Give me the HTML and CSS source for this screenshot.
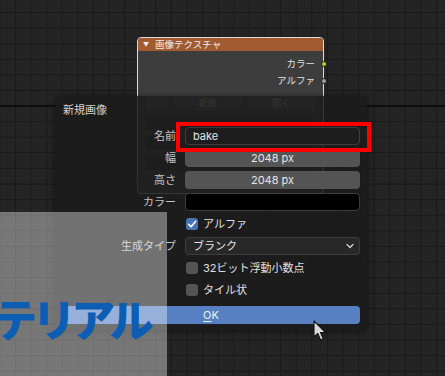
FILE: index.html
```html
<!DOCTYPE html>
<html lang="ja">
<head>
<meta charset="utf-8">
<link rel="stylesheet" href="styles.css">
</head>
<body>
<div class="canvas">
  <div class="major-line"></div>

  <div class="node">
    <div class="node-head"><span class="tri">▼</span>画像テクスチャ</div>
    <div class="node-body">
      <div class="out"><span>カラー</span><i class="sock sock-yellow"></i></div>
      <div class="out"><span>アルファ</span><i class="sock sock-gray"></i></div>
      <div class="node-tools">
        <span class="nt-icon"></span>
        <span class="nt-btn">新規</span>
        <span class="nt-btn">開く</span>
      </div>
      <div class="node-sel"></div>
      <div class="node-sel"></div>
      <div class="node-sel"></div>
      <div class="node-in"><i class="sock sock-blue"></i></div>
    </div>
  </div>

  <div class="dialog">
    <div class="dlg-title">新規画像</div>
    <div class="form">
      <label class="lbl">名前</label>
      <div class="fld fld-text">bake</div>

      <label class="lbl">幅</label>
      <div class="fld fld-num">2048 px</div>

      <label class="lbl">高さ</label>
      <div class="fld fld-num">2048 px</div>

      <label class="lbl">カラー</label>
      <div class="fld fld-color"></div>

      <span class="lbl"></span>
      <div class="chk-row"><span class="chk chk-on"><svg viewBox="0 0 12 12" width="12" height="12"><path d="M2.6 6.3 L5 8.7 L9.6 3.4" fill="none" stroke="#fff" stroke-width="1.6" stroke-linecap="round" stroke-linejoin="round"/></svg></span><span class="chk-txt">アルファ</span></div>

      <label class="lbl">生成タイプ</label>
      <div class="fld fld-menu"><span>ブランク</span><svg class="chev" viewBox="0 0 8 6" width="8" height="6"><path d="M1 1.5 L4 4.5 L7 1.5" fill="none" stroke="#d8d8d8" stroke-width="1.2" stroke-linecap="round" stroke-linejoin="round"/></svg></div>

      <span class="lbl"></span>
      <div class="chk-row"><span class="chk"></span><span class="chk-txt">32ビット浮動小数点</span></div>

      <span class="lbl"></span>
      <div class="chk-row"><span class="chk"></span><span class="chk-txt">タイル状</span></div>
    </div>
    <div class="ok-btn"><span class="ok-txt"><u>O</u>K</span></div>
  </div>

  <div class="overlay">
    <div class="banner">マテリアル</div>
  </div>

  <svg class="cursor" viewBox="0 0 14 22" width="14" height="22">
    <path d="M1 1 L1 17 L4.8 13.4 L7.6 20 L10.2 18.9 L7.5 12.5 L12.6 12.5 Z" fill="#d9d9d9" stroke="#111" stroke-width="1.1" stroke-linejoin="round"/>
  </svg>
</div>
</body>
</html>
```
FILE: styles.css
```css
* { box-sizing: border-box; }
html, body { margin: 0; padding: 0; }
body {
  width: 445px;
  height: 376px;
  overflow: hidden;
  font-family: "Inter", "Noto Sans CJK JP", sans-serif;
  background: #232323;
}
.canvas {
  position: relative;
  width: 445px;
  height: 376px;
  overflow: hidden;
  background-color: #242424;
  background-image:
    linear-gradient(to right, #191919 1.2px, transparent 1.2px),
    linear-gradient(to bottom, #191919 1.2px, transparent 1.2px);
  background-size: 15.6px 15.6px;
  background-position: 15px 12px;
}
.major-line {
  position: absolute;
  left: 0; right: 0; top: 105px;
  height: 1.6px;
  background: #0e0e0e;
}

/* Node */
.node {
  position: absolute;
  left: 137px;
  top: 37px;
  width: 187px;
  height: 157px;
  border: 1px solid #dcdcdc;
  border-radius: 4px;
  background: #3d3d3d;
  display: flex;
  flex-direction: column;
}
.node-head {
  height: 13px;
  background: #a25b31;
  border-radius: 3px 3px 0 0;
  color: #f0f0f0;
  font-size: 9.5px;
  line-height: 13px;
  display: flex;
  align-items: center;
  padding-left: 5px;
}
.tri { font-size: 6px; margin-right: 6px; color: #eee; }
.node-body {
  padding-top: 4px;
  display: flex;
  flex-direction: column;
}
.out {
  position: relative;
  height: 17px;
  line-height: 17px;
  font-size: 9.5px;
  color: #e4e4e4;
  text-align: right;
  padding-right: 8px;
}
.sock {
  position: absolute;
  width: 6px; height: 6px;
  border-radius: 50%;
  top: 5.5px;
}
.out .sock { right: -4px; }
.sock-yellow { background: #c7c729; border: 0.6px solid #222; }
.sock-gray { background: #a1a1a1; border: 0.6px solid #222; }
.sock-blue { background: #6363c7; left: -4px; border: 0.6px solid #222; }
.node-tools {
  margin-top: 7px;
  height: 14px;
  display: flex;
  gap: 6px;
  padding: 0 8px;
}
.nt-icon { width: 22px; background: #545454; border-radius: 2px; }
.nt-btn {
  flex: 1;
  background: #545454;
  border-radius: 2px;
  color: #ddd;
  font-size: 9px;
  line-height: 14px;
  text-align: center;
}
.node-sel {
  margin: 6px 8px 0;
  height: 14px;
  background: #2c2c2c;
  border-radius: 2px;
}
.node-in {
  position: relative;
  margin-top: 6px;
  height: 14px;
}
.node-in .sock { top: 4px; }

/* Dialog */
.dialog {
  position: absolute;
  left: 55px;
  top: 96px;
  width: 312px;
  height: 234px;
  background: rgba(27, 27, 27, 0.87);
  border-radius: 6px;
  box-shadow: 0 1px 6px rgba(0, 0, 0, 0.55);
  padding: 6px 7px 0 7px;
  display: flex;
  flex-direction: column;
}
.dlg-title {
  height: 16px;
  line-height: 16px;
  font-size: 11px;
  color: #d2d2d2;
  padding-left: 1px;
}
.form {
  margin-top: 9px;
  display: grid;
  grid-template-columns: 114px 1fr;
  column-gap: 9px;
  grid-auto-rows: 18px;
  row-gap: 4px;
}
.lbl {
  text-align: right;
  font-size: 11px;
  line-height: 18px;
  color: #c4c4c4;
  white-space: nowrap;
}
.fld {
  border-radius: 4px;
  font-size: 11px;
  line-height: 16px;
  color: #e6e6e6;
  border: 1px solid transparent;
}
.fld-text {
  position: relative;
  background: #1d1d1d;
  border-color: #3e3e3e;
  padding-left: 7px;
}
.fld-text::after {
  content: "";
  position: absolute;
  left: -10px;
  right: -12px;
  top: -6px;
  bottom: -8px;
  border: 4px solid #ff0000;
}
.fld-num {
  background: #545454;
  text-align: center;
}
.fld-color {
  background: #000;
  border-color: #3c3c3c;
}
.fld-menu {
  background: #282828;
  border-color: #3d3d3d;
  padding: 0 5px 0 7px;
  display: flex;
  align-items: center;
  justify-content: space-between;
}
.chev { display: block; }
.chk-row {
  display: flex;
  align-items: center;
  padding-left: 1px;
  gap: 5px;
}
.chk {
  width: 12px; height: 12px;
  border-radius: 3px;
  background: #545454;
  display: flex;
  align-items: center;
  justify-content: center;
}
.chk-on { background: #4772b3; }
.chk-on svg { display: block; }
.chk-txt {
  font-size: 11px;
  color: #e0e0e0;
  line-height: 18px;
}
.ok-btn {
  margin-top: 7px;
  height: 18px;
  background: #5680c2;
  border-radius: 4px;
  display: flex;
  align-items: center;
  justify-content: center;
}
.ok-txt {
  font-size: 11px;
  color: #f2f2f2;
  line-height: 18px;
}
.ok-txt u { text-decoration-thickness: 1px; text-underline-offset: 2px; }

/* Overlay */
.overlay {
  position: absolute;
  left: 0;
  top: 212px;
  width: 167px;
  height: 164px;
  background: rgba(255, 255, 255, 0.38);
  padding-top: 80px;
  overflow: hidden;
}
.banner {
  margin-left: -46px;
  white-space: nowrap;
  font-family: "Noto Sans CJK JP", sans-serif;
  font-weight: 900;
  font-size: 44px;
  line-height: 52px;
  letter-spacing: -5px;
  color: #0c5db4;
}

.cursor {
  position: absolute;
  left: 313px;
  top: 320px;
}
```
